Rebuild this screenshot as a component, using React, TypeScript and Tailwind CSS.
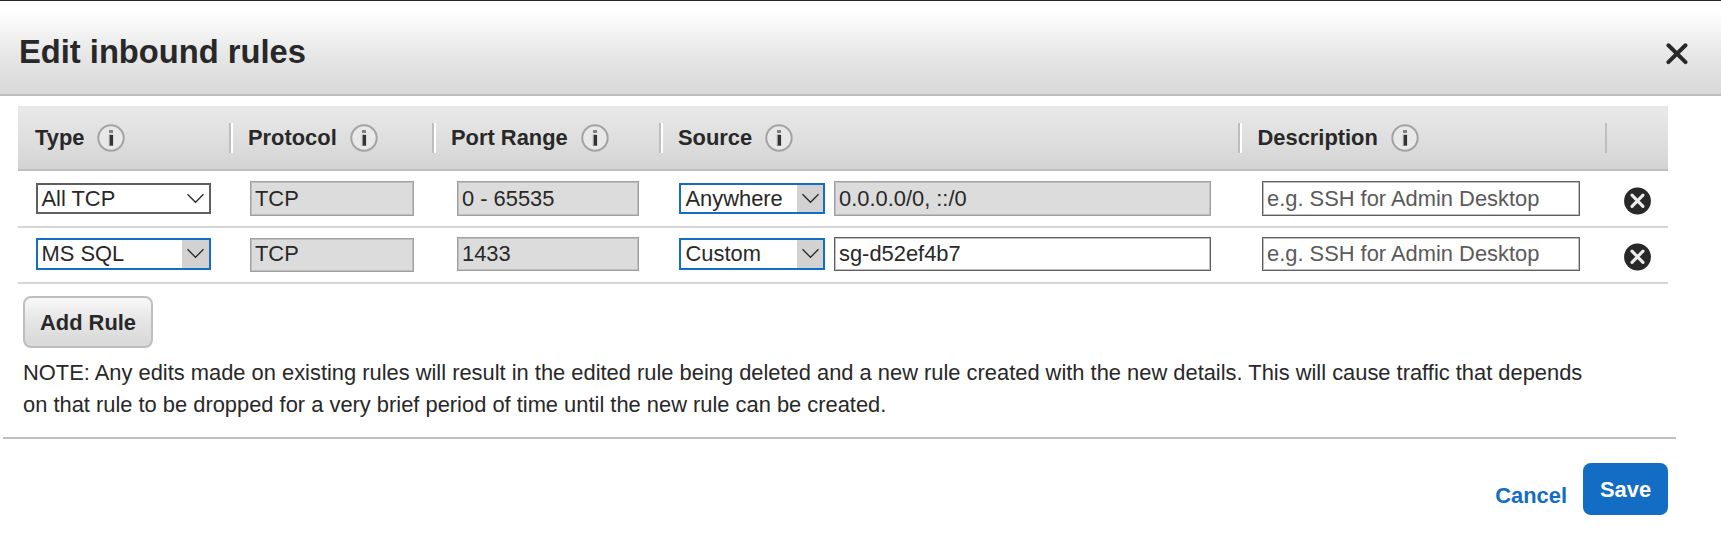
import React from "react";
import clsx from "clsx";

function InfoIcon({ className }: { className?: string }) {
  return (
    <svg viewBox="0 0 28 28" className={clsx("h-7 w-7 shrink-0", className)}>
      <circle cx="14" cy="14" r="12.7" fill="#e8e8e8" stroke="#a3a3a3" strokeWidth="2" />
      <rect x="12" y="6" width="4" height="3" fill="#808080" />
      <path d="M11.8 10.6h4.4v11.4h-4.4z" fill="#969696" />
      <rect x="13" y="11" width="3" height="10.4" fill="#333333" />
    </svg>
  );
}

function RemoveIcon() {
  return (
    <svg viewBox="0 0 27 28" className="h-7 w-[27px]">
      <circle cx="13.5" cy="14" r="13.4" fill="#282828" />
      <path d="M8 8.2 L19 19.4 M19 8.2 L8 19.4" stroke="#ececec" strokeWidth="3.1" strokeLinecap="round" />
    </svg>
  );
}

function HeaderCell({ label, cell, gap }: { label: string; cell: string; gap: string }) {
  return (
    <div className={clsx("flex h-[30px] items-center border-r-2 border-[#bebebe]", cell)}>
      <span className="leading-[30px]">{label}</span>
      <InfoIcon className={gap} />
    </div>
  );
}

function Select({
  value,
  size,
  inset,
  arrow,
  active,
}: {
  value: string;
  size: string;
  inset: string;
  arrow: string;
  active: boolean;
}) {
  return (
    <div
      className={clsx(
        "flex shrink-0 items-stretch justify-between border-2 bg-white",
        active ? "border-[#146dc4]" : "border-[#5f5f5f]",
        size
      )}
    >
      <span className={clsx("leading-[27px]", inset)}>{value}</span>
      <span className={clsx("flex justify-center", arrow, active && "bg-[#d2d2d2]")}>
        <svg viewBox="0 0 27 27" className="h-[27px] w-[27px] shrink-0" fill="none" stroke="#282828" strokeWidth="1.3">
          <path d="M5.5 9.3 L13.5 17.3 L21.5 9.3" />
        </svg>
      </span>
    </div>
  );
}

function Field({ value, size, kind }: { value: string; size: string; kind: "disabled" | "filled" | "placeholder" }) {
  return (
    <div
      className={clsx(
        "shrink-0 border pl-1 shadow-[inset_0_0_0_1px_#bebebe]",
        kind === "disabled" ? "border-[#a0a0a0] bg-[#dcdcdc]" : "border-[#5f5f5f] bg-white",
        kind === "placeholder" && "text-[#5a5a5a]",
        size
      )}
    >
      {value}
    </div>
  );
}

type Rule = {
  type: string;
  typeActive: boolean;
  protocol: string;
  port: string;
  source: string;
  address: string;
  addressKind: "disabled" | "filled";
  row: string;
  select: string;
  protocolBox: string;
  box: string;
  icon: string;
};

const rules: Rule[] = [
  {
    type: "All TCP",
    typeActive: false,
    protocol: "TCP",
    port: "0 - 65535",
    source: "Anywhere",
    address: "0.0.0.0/0, ::/0",
    addressKind: "disabled",
    row: "h-[57px]",
    select: "mt-3 h-[31px]",
    protocolBox: "mt-2.5 h-[35px] leading-[33px]",
    box: "mt-2.5 h-[35px] leading-[33px]",
    icon: "pt-4",
  },
  {
    type: "MS SQL",
    typeActive: true,
    protocol: "TCP",
    port: "1433",
    source: "Custom",
    address: "sg-d52ef4b7",
    addressKind: "filled",
    row: "h-[56px]",
    select: "mt-2.5 h-8",
    protocolBox: "mt-2.5 h-[34px] leading-[30px]",
    box: "mt-[9px] h-[34px] leading-[32px]",
    icon: "pt-[15px]",
  },
];

export default function App() {
  return (
    <div className="h-[533px] w-[1721px] overflow-hidden bg-white font-['Liberation_Sans',Arial,sans-serif] text-[21.89px] text-[#282828]">
      <header className="flex h-24 justify-between border-t border-b-2 border-t-[#282828] border-b-[#bebebe] bg-[linear-gradient(to_bottom,#ffffff_10%,#e8e8e8_56%,#dcdcdc_88%,#d8d8d8_100%)] pr-[33px] pl-[19px]">
        <h1 className="mt-8 text-[32.7px] leading-[38px] font-bold">Edit inbound rules</h1>
        <svg viewBox="0 0 22 22" className="mt-[42px] h-[22px] w-[22px]">
          <path d="M2.4 2.3 L19.5 19.1 M19.5 2.3 L2.4 19.1" stroke="#282828" strokeWidth="4" strokeLinecap="round" />
        </svg>
      </header>

      <section className="mt-2.5 ml-[18px] w-[1650px]">
        <div className="flex h-[65px] border-b-2 border-[#bebebe] bg-[linear-gradient(to_bottom,#e8e8e8_6%,#dcdcdc_65%,#d3d3d3_100%)] pt-[17px] font-bold">
          <HeaderCell label="Type" cell="w-[213px] pl-[17px]" gap="ml-[13px]" />
          <HeaderCell label="Protocol" cell="w-[203px] pl-[15px] border-l-2 border-l-white" gap="ml-[13px]" />
          <HeaderCell label="Port Range" cell="w-[227px] pl-[15px] border-l-2 border-l-white" gap="ml-[13px]" />
          <HeaderCell label="Source" cell="w-[579px] pl-[15px] border-l-2 border-l-white" gap="ml-[13px]" />
          <HeaderCell label="Description" cell="w-[367px] pl-[15.5px] border-l-2 border-l-white" gap="ml-[13px]" />
        </div>
        {rules.map((r) => (
          <div key={r.type} className={clsx("flex border-b-2 border-[#d6d6d6]", r.row)}>
            <div className="w-[213px] pl-[18px]">
              <Select
                value={r.type}
                active={r.typeActive}
                inset="pl-[3.5px]"
                arrow="w-[27px]"
                size={clsx("w-[175px]", r.select)}
              />
            </div>
            <div className="w-[203px] pl-[19px]">
              <Field value={r.protocol} kind="disabled" size={clsx("w-[164px]", r.protocolBox)} />
            </div>
            <div className="w-[227px] pl-[23px]">
              <Field value={r.port} kind="disabled" size={clsx("w-[182px]", r.box)} />
            </div>
            <div className="flex w-[579px] gap-[9px] pl-[18px]">
              <Select value={r.source} active inset="pl-[4.5px]" arrow="w-[26px]" size={clsx("w-[146px]", r.select)} />
              <Field value={r.address} kind={r.addressKind} size={clsx("w-[377px]", r.box)} />
            </div>
            <div className="w-[367px] pl-[22px]">
              <Field value="e.g. SSH for Admin Desktop" kind="placeholder" size={clsx("w-[318px]", r.box)} />
            </div>
            <div className={clsx("w-[61px] pl-[17px]", r.icon)}>
              <RemoveIcon />
            </div>
          </div>
        ))}
      </section>

      <button className="mt-3 ml-[23px] block h-[52px] w-[130px] rounded-lg border-2 border-[#bebebe] bg-[linear-gradient(to_bottom,#f8f8f8,#e8e8e8_40%,#dadada_90%)] pt-0.5 font-bold">
        Add Rule
      </button>

      <p className="mt-[9px] ml-[23px] w-[1620px] leading-8">
        NOTE: Any edits made on existing rules will result in the edited rule being deleted and a new rule created with the new details. This will cause traffic that depends
        <br />
        on that rule to be dropped for a very brief period of time until the new rule can be created.
      </p>

      <footer className="mt-4 ml-[3px] flex w-[1673px] items-start justify-end border-t-2 border-[#bebebe] pt-6 pr-2 font-bold">
        <a className="mt-5 mr-4 leading-[26px] text-[#146dc4]">Cancel</a>
        <button className="h-[52px] w-[85px] rounded-lg bg-[#146dc4] pt-0.5 text-white">Save</button>
      </footer>
    </div>
  );
}
